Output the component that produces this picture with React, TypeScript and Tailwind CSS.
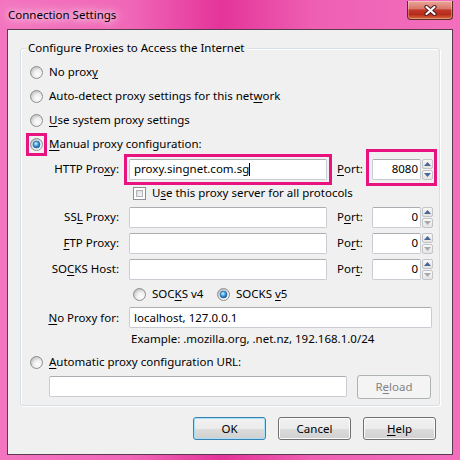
import React from "react";

function U({ c }: { c: string }) {
  return <span className="underline decoration-[1px] underline-offset-[2px]">{c}</span>;
}

function Radio({ checked = false }: { checked?: boolean }) {
  return (
    <svg width="13" height="13" viewBox="0 0 13 13" className="block shrink-0">
      <defs>
        <radialGradient id="rbg" cx="0.62" cy="0.66" r="0.7">
          <stop offset="0" stopColor="#ffffff" />
          <stop offset="0.5" stopColor="#eeeeee" />
          <stop offset="1" stopColor="#b9bbbd" />
        </radialGradient>
        <radialGradient id="rdot" cx="0.42" cy="0.38" r="0.68">
          <stop offset="0" stopColor="#dff6ff" />
          <stop offset="0.45" stopColor="#45a6e6" />
          <stop offset="1" stopColor="#0c4787" />
        </radialGradient>
      </defs>
      <circle cx="6.5" cy="6.5" r="6" fill="url(#rbg)" stroke="#8e8f8f" strokeWidth="1" />
      {checked && <circle cx="6.5" cy="6.5" r="3.5" fill="url(#rdot)" stroke="#1d5d97" strokeWidth="0.6" />}
    </svg>
  );
}

function Checkbox() {
  return (
    <div className="w-[13px] h-[13px] shrink-0 border border-[#8f8f8f] bg-white p-[2px]">
      <div className="w-full h-full border border-[#aeb3b9] bg-[linear-gradient(135deg,#d9d9d9,#fbfbfb)]" />
    </div>
  );
}

function Spin({ down = false }: { down?: boolean }) {
  return (
    <div className="ml-[1px] flex flex-col w-[11px] h-[21px] gap-[1px]">
      <div className="h-[10px] border border-[#c2c4c8] rounded-[2px] bg-[linear-gradient(180deg,#f8f8f8,#e4e4e4)] flex items-center justify-center">
        <svg width="7" height="4" viewBox="0 0 7 4" className="block">
          <path d="M0 4 L3.5 0 L7 4 Z" fill="#4b6594" />
        </svg>
      </div>
      <div className="h-[10px] border border-[#c2c4c8] rounded-[2px] bg-[linear-gradient(180deg,#f8f8f8,#e4e4e4)] flex items-center justify-center">
        <svg width="7" height="4" viewBox="0 0 7 4" className="block">
          <path d="M0 0 L3.5 4 L7 0 Z" fill={down ? "#4b6594" : "#a9a9a9"} />
        </svg>
      </div>
    </div>
  );
}

function PortField({ value, down = false, pink = false }: { value: string; down?: boolean; pink?: boolean }) {
  return (
    <div className="relative flex items-center">
      <div className="w-[49px] h-[21px] bg-white border border-[#c9ccd2] border-t-[#abadb3] rounded-[2px] flex items-center justify-end pr-[2px]">
        {value}
      </div>
      <Spin down={down} />
      {pink && (
        <div className="absolute -left-[6px] -top-[10px] -right-[4px] -bottom-[6px] border-[3px] border-[#e8137f]" />
      )}
    </div>
  );
}

function Field({ children, className = "" }: { children?: React.ReactNode; className?: string }) {
  return (
    <div
      className={`h-[21px] bg-white border border-[#c9ccd2] border-t-[#abadb3] rounded-[2px] flex items-center pl-[4px] ${className}`}
    >
      {children}
    </div>
  );
}

function ProxyRow({ label, port, portLabel }: { label: React.ReactNode; port: string; portLabel: React.ReactNode }) {
  return (
    <div className="h-[26px] flex items-center">
      <span className="w-[98px] text-right">{label}</span>
      <Field className="ml-[10px] w-[198px]" />
      <span className="ml-[10px] w-[35px]">{portLabel}</span>
      <PortField value={port} />
    </div>
  );
}

function Btn({
  children,
  kind = "normal",
  className = "",
}: {
  children: React.ReactNode;
  kind?: "normal" | "default" | "disabled";
  className?: string;
}) {
  const cls =
    kind === "default"
      ? "border-[#3c7fb1] bg-[linear-gradient(180deg,#f2f2f2_0%,#ebebeb_50%,#dddddd_51%,#cfcfcf_100%)] shadow-[inset_0_0_0_1px_#a6e3fa]"
      : kind === "disabled"
      ? "border-[#adb2b5] bg-[#f4f4f4] text-[#838383]"
      : "border-[#707070] bg-[linear-gradient(180deg,#f2f2f2_0%,#ebebeb_50%,#dddddd_51%,#cfcfcf_100%)] shadow-[inset_0_0_0_1px_#fcfcfc]";
  return (
    <div className={`rounded-[3px] border flex items-center justify-center ${cls} ${className}`}>{children}</div>
  );
}

function CloseBtn() {
  return (
    <div className="mt-[1px] mr-[7px] w-[46px] h-[19px] rounded-b-[4px] border border-t-0 border-[#5e2a24] bg-[linear-gradient(180deg,#eba798_0%,#d9786b_42%,#c2392b_50%,#b52c1c_75%,#dd6a3d_100%)] shadow-[inset_0_0_0_1px_rgba(255,255,255,0.3)] flex items-center justify-center">
      <svg width="15" height="11" viewBox="0 0 15 11" className="block">
        <path d="M3.5 2 L11.5 9 M11.5 2 L3.5 9" stroke="#4a1e1e" strokeWidth="4.2" strokeLinecap="round" />
        <path d="M3.5 2 L11.5 9 M11.5 2 L3.5 9" stroke="#ffffff" strokeWidth="2.2" strokeLinecap="round" />
      </svg>
    </div>
  );
}

export default function App() {
  return (
    <div className="w-[460px] h-[460px] flex flex-col font-['Noto_Sans','Open_Sans',sans-serif] text-[11.5px] leading-[16px] text-black bg-[linear-gradient(90deg,#f375c0_0%,#f067b8_28%,#e4349a_48%,#ee5fb2_68%,#f36fbe_100%)]">
      <div className="h-[29px] shrink-0 flex justify-between items-start">
        <div className="pl-[8px] pt-[7px] [text-shadow:0_0_6px_rgba(255,255,255,0.95),0_0_12px_rgba(255,255,255,0.85),0_0_18px_rgba(255,255,255,0.6)]">
          Connection Settings
        </div>
        <CloseBtn />
      </div>
      <div className="mx-[7px] mb-[5px] flex-1 border border-[#5a3b4d] bg-[#f0f0f0] flex flex-col">
        <div className="relative ml-[12px] mt-[18px] w-[420px] h-[358px] border border-[#d5dfe5] rounded-[3px] shadow-[inset_1px_1px_0_#ffffff,1px_1px_0_#ffffff] pt-[11px] pb-[7px] flex flex-col">
          <span className="absolute left-[5px] -top-[9px] px-[2px] bg-[#f0f0f0]">
            Configure Proxies to Access the Internet
          </span>

          <div className="h-[24px] flex items-center pl-[9px] gap-[6px]">
            <Radio />
            <span>
              No prox<U c="y" />
            </span>
          </div>
          <div className="h-[24px] flex items-center pl-[9px] gap-[6px]">
            <Radio />
            <span>
              Auto-detect proxy settings for this net<U c="w" />ork
            </span>
          </div>
          <div className="h-[24px] flex items-center pl-[9px] gap-[6px]">
            <Radio />
            <span>
              <U c="U" />se system proxy settings
            </span>
          </div>
          <div className="h-[24px] flex items-center pl-[9px] gap-[6px]">
            <div className="relative w-[13px] h-[13px]">
              <Radio checked />
              <div className="absolute -left-[4px] -top-[5px] w-[21px] h-[23px] border-[3px] border-[#e8137f]" />
            </div>
            <span>
              <U c="M" />anual proxy configuration:
            </span>
          </div>

          <div className="h-[26px] flex items-center">
            <span className="w-[98px] text-right">
              HTTP Pro<U c="x" />y:
            </span>
            <div className="relative ml-[10px]">
              <Field className="w-[198px] border-[#7eb4ea] border-t-[#5d9ad8]">
                <span>proxy.singnet.com.sg</span>
                <span className="w-[1px] h-[13px] bg-black" />
              </Field>
              <div className="absolute -inset-[5px] border-[3px] border-[#e8137f]" />
            </div>
            <span className="ml-[10px] w-[35px]">
              <U c="P" />ort:
            </span>
            <PortField value="8080" down pink />
          </div>

          <div className="h-[22px] flex items-center pl-[112px] gap-[6px]">
            <Checkbox />
            <span>
              U<U c="s" />e this proxy server for all protocols
            </span>
          </div>

          <ProxyRow
            label={
              <>
                SS<U c="L" /> Proxy:
              </>
            }
            portLabel={
              <>
                P<U c="o" />rt:
              </>
            }
            port="0"
          />
          <ProxyRow
            label={
              <>
                <U c="F" />TP Proxy:
              </>
            }
            portLabel={
              <>
                Po<U c="r" />t:
              </>
            }
            port="0"
          />
          <ProxyRow
            label={
              <>
                SO<U c="C" />KS Host:
              </>
            }
            portLabel={
              <>
                Por<U c="t" />:
              </>
            }
            port="0"
          />

          <div className="h-[24px] flex items-center pl-[112px]">
            <div className="w-[84px] flex items-center gap-[6px]">
              <Radio />
              <span>
                SOC<U c="K" />S v4
              </span>
            </div>
            <div className="flex items-center gap-[6px]">
              <Radio checked />
              <span>
                SOCKS <U c="v" />5
              </span>
            </div>
          </div>

          <div className="h-[23px] flex items-center">
            <span className="w-[98px] text-right">
              <U c="N" />o Proxy for:
            </span>
            <Field className="ml-[10px] w-[303px] h-[20px]">localhost, 127.0.0.1</Field>
          </div>

          <div className="h-[20px] flex items-center pl-[110px]">Example: .mozilla.org, .net.nz, 192.168.1.0/24</div>

          <div className="h-[26px] flex items-center pl-[9px] gap-[6px]">
            <Radio />
            <span>
              <U c="A" />utomatic proxy configuration URL:
            </span>
          </div>

          <div className="h-[23px] flex items-center pl-[28px]">
            <Field className="w-[298px] h-[20px]" />
            <Btn kind="disabled" className="ml-[10px] w-[74px] h-[24px]">
              R<U c="e" />load
            </Btn>
          </div>
        </div>

        <div className="mt-[11px] flex justify-end gap-[12px] pr-[16px]">
          <Btn kind="default" className="w-[73px] h-[23px]">
            OK
          </Btn>
          <Btn className="w-[73px] h-[23px]">Cancel</Btn>
          <Btn className="w-[73px] h-[23px]">
            <U c="H" />elp
          </Btn>
        </div>
      </div>
    </div>
  );
}
